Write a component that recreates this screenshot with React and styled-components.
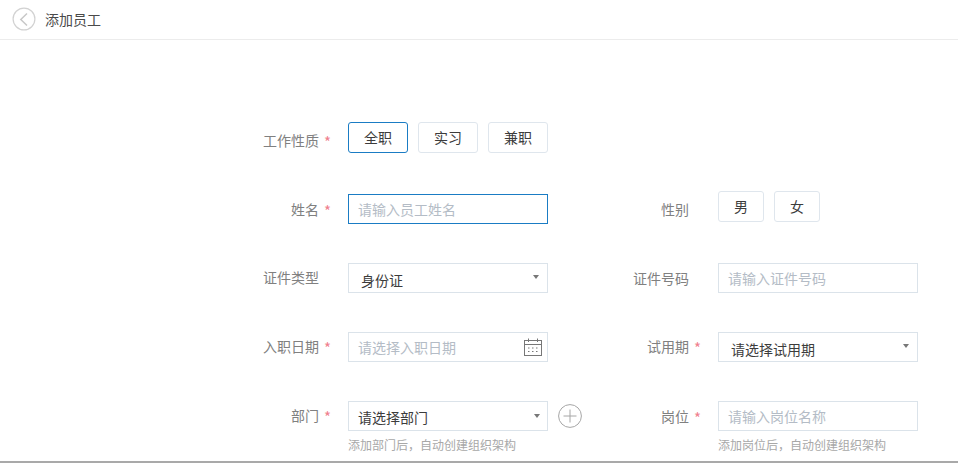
import React from "react";
import styled, { createGlobalStyle } from "styled-components";

const Global = createGlobalStyle`
  html, body { margin: 0; padding: 0; background: #fff; }
  body { font-family: "Noto Sans CJK SC", "Liberation Sans", sans-serif; overflow: hidden; }
`;
const Page = styled.div`
  width: 958px; height: 463px; display: flex; flex-direction: column; box-sizing: border-box;
  border-bottom: 2px solid #a9a9a9; overflow: hidden;
`;
const Header = styled.header`
  height: 40px; flex: none; box-sizing: border-box; border-bottom: 1px solid #ececec;
  display: flex; align-items: center; padding: 0 0 1px 12px; gap: 9px;
  font-size: 14px; color: #4a4a4a;
`;
const Form = styled.main`
  padding: 82px 0 0 250px; display: flex; flex-direction: column;
`;
const Row = styled.div`
  display: grid; grid-template-columns: 368px 300px; height: ${p => p.$h}px; align-items: start;
`;
const Item = styled.div`
  display: flex; align-items: flex-start; margin-top: ${p => p.$top || 0}px;
`;
const Label = styled.div`
  width: ${p => p.$w}px; flex: none; box-sizing: border-box; padding-right: 29px; text-align: right;
  font-size: 14px; line-height: 20px; color: #808080; position: relative;
  padding-top: ${p => p.$pt ?? 6}px; white-space: nowrap;
`;
const Star = styled.span`
  position: absolute; right: 17px; top: ${p => p.$pt + 1}px; color: #f0808e; font-size: 15px; line-height: 22px;
`;
const Choices = styled.div`display: flex; gap: 10px;`;
const Choice = styled.div`
  width: ${p => p.$w}px; height: 31px; box-sizing: border-box; border-radius: 3px;
  border: 1px solid ${p => p.$on ? "#1a7cc4" : "#dfe6ed"};
  display: flex; align-items: center; justify-content: center; padding-bottom: 2px;
  font-size: 14px; color: #3c3c3c;
`;
const Control = styled.div`
  width: 200px; height: 30px; box-sizing: border-box; border: 1px solid ${p => p.$focus ? "#1a7cc4" : "#dbe3ea"};
  display: flex; align-items: center; justify-content: space-between;
  padding: ${p => p.$shift || 0}px ${p => p.$pr ?? 8}px 0 ${p => p.$pl ?? 9}px; font-size: 14px;
  color: ${p => p.$ph ? "#b4bcc6" : "#3c3c3c"}; white-space: nowrap;
`;
const Caret = styled.span`
  width: 0; height: 0; border: 3px solid transparent; border-top: 4px solid #777; border-bottom: 0; flex: none;
  margin-top: ${p => p.$up || 0}px;
`;
const Stack = styled.div`display: flex; flex-direction: column;`;
const Hint = styled.div`font-size: 12px; line-height: 16px; margin-top: 6px; color: #a8a8a8; white-space: nowrap;`;
const Inline = styled.div`display: flex; align-items: center; gap: 10px;`;

const Back = () => (
  <svg width="24" height="24" viewBox="0 0 24 24" fill="none">
    <circle cx="12" cy="12" r="10.9" stroke="#d2d2d2" strokeWidth="1.2" />
    <path d="M15 6.5 L8.8 12.5 L15 18.5" stroke="#c8c8c8" strokeWidth="1.5" />
  </svg>
);
const Calendar = () => (
  <svg width="18" height="19" viewBox="0 0 18 19" fill="none" stroke="#777">
    <rect x="0.5" y="2.5" width="17" height="15" />
    <path d="M0.5 6.5H17.5" />
    <path d="M4.5 0.5v3.5M13.5 0.5v3.5" />
    <path d="M4 10h2M8 10h2M12 10h2M4 13.5h2M8 13.5h2M12 13.5h2" strokeDasharray="1 0.5" />
  </svg>
);
const Plus = () => (
  <svg width="24" height="24" viewBox="0 0 24 24" fill="none" stroke="#a6a6a6">
    <circle cx="12" cy="12" r="11.4" />
    <path d="M12 5.5V18.5M5.5 12H18.5" />
  </svg>
);

const Field = ({ label, req, w, pt, children, top }) => (
  <Item $top={top}>
    <Label $w={w} $pt={pt}>{label}{req && <Star $pt={pt}>*</Star>}</Label>
    {children}
  </Item>
);

export default function App() {
  return (
    <Page>
      <Global />
      <Header><Back /><span>添加员工</span></Header>
      <Form>
        <Row $h={72}>
          <Field label="工作性质" req w={98} pt={8}>
            <Choices>
              <Choice $w={60} $on>全职</Choice>
              <Choice $w={60}>实习</Choice>
              <Choice $w={60}>兼职</Choice>
            </Choices>
          </Field>
        </Row>
        <Row $h={69}>
          <Field label="姓名" req w={98} pt={5}>
            <Control $focus $ph>请输入员工姓名</Control>
          </Field>
          <Field label="性别" w={100} pt={8} top={-3}>
            <Choices>
              <Choice $w={46}>男</Choice>
              <Choice $w={46}>女</Choice>
            </Choices>
          </Field>
        </Row>
        <Row $h={69}>
          <Field label="证件类型" w={98} pt={4}>
            <Control $pl={12} $shift={3}><span>身份证</span><Caret $up={-5} /></Control>
          </Field>
          <Field label="证件号码" w={100} pt={5}>
            <Control $ph>请输入证件号码</Control>
          </Field>
        </Row>
        <Row $h={69}>
          <Field label="入职日期" req w={98} pt={4}>
            <Control $ph $pr={5}><span>请选择入职日期</span><Calendar /></Control>
          </Field>
          <Field label="试用期" req w={100} pt={4}>
            <Control $pl={12} $shift={3}><span>请选择试用期</span><Caret $up={-5} /></Control>
          </Field>
        </Row>
        <Row $h={69}>
          <Field label="部门" req w={98} pt={4}>
            <Stack>
              <Inline>
                <Control $shift={2} $pr={7}><span>请选择部门</span><Caret $up={-2} /></Control>
                <Plus />
              </Inline>
              <Hint>添加部门后，自动创建组织架构</Hint>
            </Stack>
          </Field>
          <Field label="岗位" req w={100} pt={5}>
            <Stack>
              <Control $ph>请输入岗位名称</Control>
              <Hint>添加岗位后，自动创建组织架构</Hint>
            </Stack>
          </Field>
        </Row>
      </Form>
    </Page>
  );
}
